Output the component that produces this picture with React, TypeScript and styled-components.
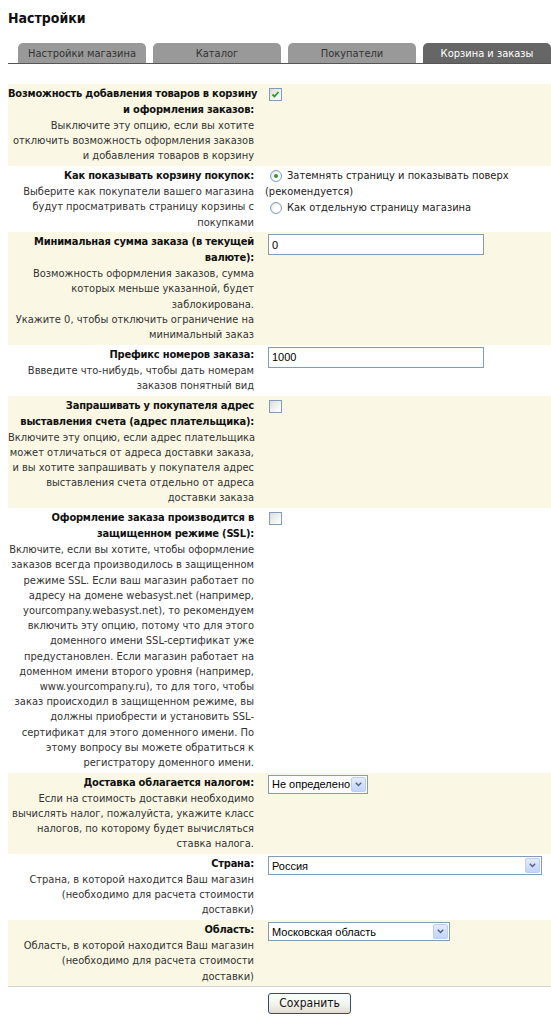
import React from "react";
import styled, { createGlobalStyle } from "styled-components";

const GlobalStyle = createGlobalStyle`
  body {
    margin: 0;
    background: #fff;
    font-family: "DejaVu Sans Condensed", "DejaVu Sans", sans-serif;
    color: #222;
  }
`;

const Page = styled.div`
  padding: 8px 0 0 8px;
`;

const Title = styled.h1`
  margin: 0;
  font-size: 14px;
  line-height: 20px;
  font-weight: bold;
  color: #111;
`;

const TabBar = styled.div`
  margin-top: 15px;
  display: flex;
  gap: 7px;
  padding-left: 10px;
  border-bottom: 1px solid #555;
`;

const Tab = styled.div<{ $active?: boolean }>`
  width: 128px;
  height: 20px;
  line-height: 21px;
  text-align: center;
  font-size: 11px;
  border-radius: 5px 5px 0 0;
  background: ${(p) => (p.$active ? "#666" : "#999")};
  color: ${(p) => (p.$active ? "#fff" : "#333")};
`;

const Form = styled.div`
  margin-top: 20px;
  border-bottom: 1px solid #d4d4d4;
`;

const Row = styled.div<{ $shaded?: boolean }>`
  display: grid;
  grid-template-columns: 254px 1fr;
  padding: 2px 0 2.5px;
  background: ${(p) => (p.$shaded ? "#faf8e5" : "#fff")};
  font-size: 11px;
`;

const LabelCell = styled.div`
  text-align: right;
  white-space: nowrap;
  padding-right: 8px;
`;

const Caption = styled.div`
  font-weight: bold;
  line-height: 16px;
  letter-spacing: -0.2px;
  color: #111;
`;

const Hint = styled.div`
  line-height: 15.2px;
  color: #333;
`;

const ControlCell = styled.div`
  padding-left: 3px;
  line-height: 16px;
  white-space: nowrap;
  color: #222;
`;

const Box = styled.span`
  display: inline-block;
  box-sizing: border-box;
  width: 13px;
  height: 13px;
  margin: 2px 0 0 4px;
  border: 1px solid #7f9db9;
  background: linear-gradient(135deg, #dcdcd7 0%, #fbfbf9 80%);
  vertical-align: top;
  position: relative;
  svg {
    position: absolute;
    left: 1px;
    top: 1px;
  }
`;

const Radio = styled.span<{ $checked?: boolean }>`
  display: inline-block;
  box-sizing: border-box;
  width: 12px;
  height: 12px;
  margin: 2px 5px 0 5px;
  border-radius: 50%;
  border: 1px solid #7f9db9;
  background: radial-gradient(circle at 65% 65%, #fff 30%, #dcdcd7 100%);
  vertical-align: top;
  position: relative;
  &::after {
    content: "";
    display: ${(p) => (p.$checked ? "block" : "none")};
    position: absolute;
    left: 3px;
    top: 3px;
    width: 4px;
    height: 4px;
    border-radius: 50%;
    background: #3d8f3d;
  }
`;

const TextInput = styled.input`
  box-sizing: border-box;
  width: 216px;
  height: 21px;
  margin: 0 0 0 3px;
  padding: 0 3px;
  border: 1px solid #7f9db9;
  font-family: "Liberation Sans", Arial, sans-serif;
  font-size: 11px;
  color: #000;
  background: #fff;
  outline: none;
`;

const SelectBox = styled.div<{ $width: number }>`
  box-sizing: border-box;
  display: flex;
  align-items: center;
  justify-content: space-between;
  width: ${(p) => p.$width}px;
  height: 19px;
  margin: 0 0 0 3px;
  padding: 0 1px 0 3px;
  border: 1px solid #7f9db9;
  background: #fff;
  font-family: "Liberation Sans", Arial, sans-serif;
  font-size: 11px;
  color: #000;
`;

const SelectArrow = styled.span`
  box-sizing: border-box;
  width: 15px;
  height: 15px;
  display: flex;
  align-items: center;
  justify-content: center;
  border: 1px solid #bccef6;
  border-radius: 2px;
  background: linear-gradient(180deg, #e3ebfd 0%, #c3d4fb 100%);
`;

const Footer = styled.div`
  display: grid;
  grid-template-columns: 254px 1fr;
  padding-top: 5px;
`;

const SaveButton = styled.button`
  width: 83px;
  height: 21px;
  margin-left: 6px;
  padding: 0;
  border: 1px solid #2b4f78;
  border-radius: 3px;
  background: linear-gradient(180deg, #ffffff 0%, #f2f1ea 60%, #dedcd1 100%);
  font-family: "DejaVu Sans Condensed", "DejaVu Sans", sans-serif;
  font-size: 12px;
  color: #111;
`;

function Check({ checked }: { checked?: boolean }) {
  return (
    <Box>
      {checked && (
        <svg width="9" height="9" viewBox="0 0 9 9">
          <path d="M1.5 4.5 L3.5 6.5 L7.5 2" fill="none" stroke="#21a121" strokeWidth="1.8" />
        </svg>
      )}
    </Box>
  );
}

function Select({ value, width }: { value: string; width: number }) {
  return (
    <SelectBox $width={width}>
      <span>{value}</span>
      <SelectArrow>
        <svg width="7" height="5" viewBox="0 0 7 5">
          <path d="M0.8 0.8 L3.5 3.6 L6.2 0.8" fill="none" stroke="#4d6185" strokeWidth="1.4" />
        </svg>
      </SelectArrow>
    </SelectBox>
  );
}

const lines = (items: string[]) =>
  items.map((t, i) => (
    <React.Fragment key={i}>
      {i > 0 && <br />}
      {t}
    </React.Fragment>
  ));

type Setting = {
  caption: string[];
  hint: string[];
  control: React.ReactNode;
};

const settings: Setting[] = [
  {
    caption: ["Возможность добавления товаров в корзину", "и оформления заказов:"],
    hint: [
      "Выключите эту опцию, если вы хотите",
      "отключить возможность оформления заказов",
      "и добавления товаров в корзину",
    ],
    control: <Check checked />,
  },
  {
    caption: ["Как показывать корзину покупок:"],
    hint: [
      "Выберите как покупатели вашего магазина",
      "будут просматривать страницу корзины с",
      "покупками",
    ],
    control: (
      <>
        <Radio $checked />
        Затемнять страницу и показывать поверх
        <br />
        (рекомендуется)
        <br />
        <Radio />
        Как отдельную страницу магазина
      </>
    ),
  },
  {
    caption: ["Минимальная сумма заказа (в текущей", "валюте):"],
    hint: [
      "Возможность оформления заказов, сумма",
      "которых меньше указанной, будет",
      "заблокирована.",
      "Укажите 0, чтобы отключить ограничение на",
      "минимальный заказ",
    ],
    control: <TextInput defaultValue="0" />,
  },
  {
    caption: ["Префикс номеров заказа:"],
    hint: ["Ввведите что-нибудь, чтобы дать номерам", "заказов понятный вид"],
    control: <TextInput defaultValue="1000" />,
  },
  {
    caption: ["Запрашивать у покупателя адрес", "выставления счета (адрес плательщика):"],
    hint: [
      "Включите эту опцию, если адрес плательщика",
      "может отличаться от адреса доставки заказа,",
      "и вы хотите запрашивать у покупателя адрес",
      "выставления счета отдельно от адреса",
      "доставки заказа",
    ],
    control: <Check />,
  },
  {
    caption: ["Оформление заказа производится в", "защищенном режиме (SSL):"],
    hint: [
      "Включите, если вы хотите, чтобы оформление",
      "заказов всегда производилось в защищенном",
      "режиме SSL. Если ваш магазин работает по",
      "адресу на домене webasyst.net (например,",
      "yourcompany.webasyst.net), то рекомендуем",
      "включить эту опцию, потому что для этого",
      "доменного имени SSL-сертификат уже",
      "предустановлен. Если магазин работает на",
      "доменном имени второго уровня (например,",
      "www.yourcompany.ru), то для того, чтобы",
      "заказ происходил в защищенном режиме, вы",
      "должны приобрести и установить SSL-",
      "сертификат для этого доменного имени. По",
      "этому вопросу вы можете обратиться к",
      "регистратору доменного имени.",
    ],
    control: <Check />,
  },
  {
    caption: ["Доставка облагается налогом:"],
    hint: [
      "Если на стоимость доставки необходимо",
      "вычислять налог, пожалуйста, укажите класс",
      "налогов, по которому будет вычисляться",
      "ставка налога.",
    ],
    control: <Select value="Не определено" width={100} />,
  },
  {
    caption: ["Страна:"],
    hint: [
      "Страна, в которой находится Ваш магазин",
      "(необходимо для расчета стоимости",
      "доставки)",
    ],
    control: <Select value="Россия" width={274} />,
  },
  {
    caption: ["Область:"],
    hint: [
      "Область, в которой находится Ваш магазин",
      "(необходимо для расчета стоимости",
      "доставки)",
    ],
    control: <Select value="Московская область" width={182} />,
  },
];

const tabs = ["Настройки магазина", "Каталог", "Покупатели", "Корзина и заказы"];

export default function App() {
  return (
    <Page>
      <GlobalStyle />
      <Title>Настройки</Title>
      <TabBar>
        {tabs.map((t, i) => (
          <Tab key={t} $active={i === tabs.length - 1}>
            {t}
          </Tab>
        ))}
      </TabBar>
      <Form>
        {settings.map((s, i) => (
          <Row key={i} $shaded={i % 2 === 0}>
            <LabelCell>
              <Caption>{lines(s.caption)}</Caption>
              <Hint>{lines(s.hint)}</Hint>
            </LabelCell>
            <ControlCell>{s.control}</ControlCell>
          </Row>
        ))}
      </Form>
      <Footer>
        <span />
        <div>
          <SaveButton>Сохранить</SaveButton>
        </div>
      </Footer>
    </Page>
  );
}
